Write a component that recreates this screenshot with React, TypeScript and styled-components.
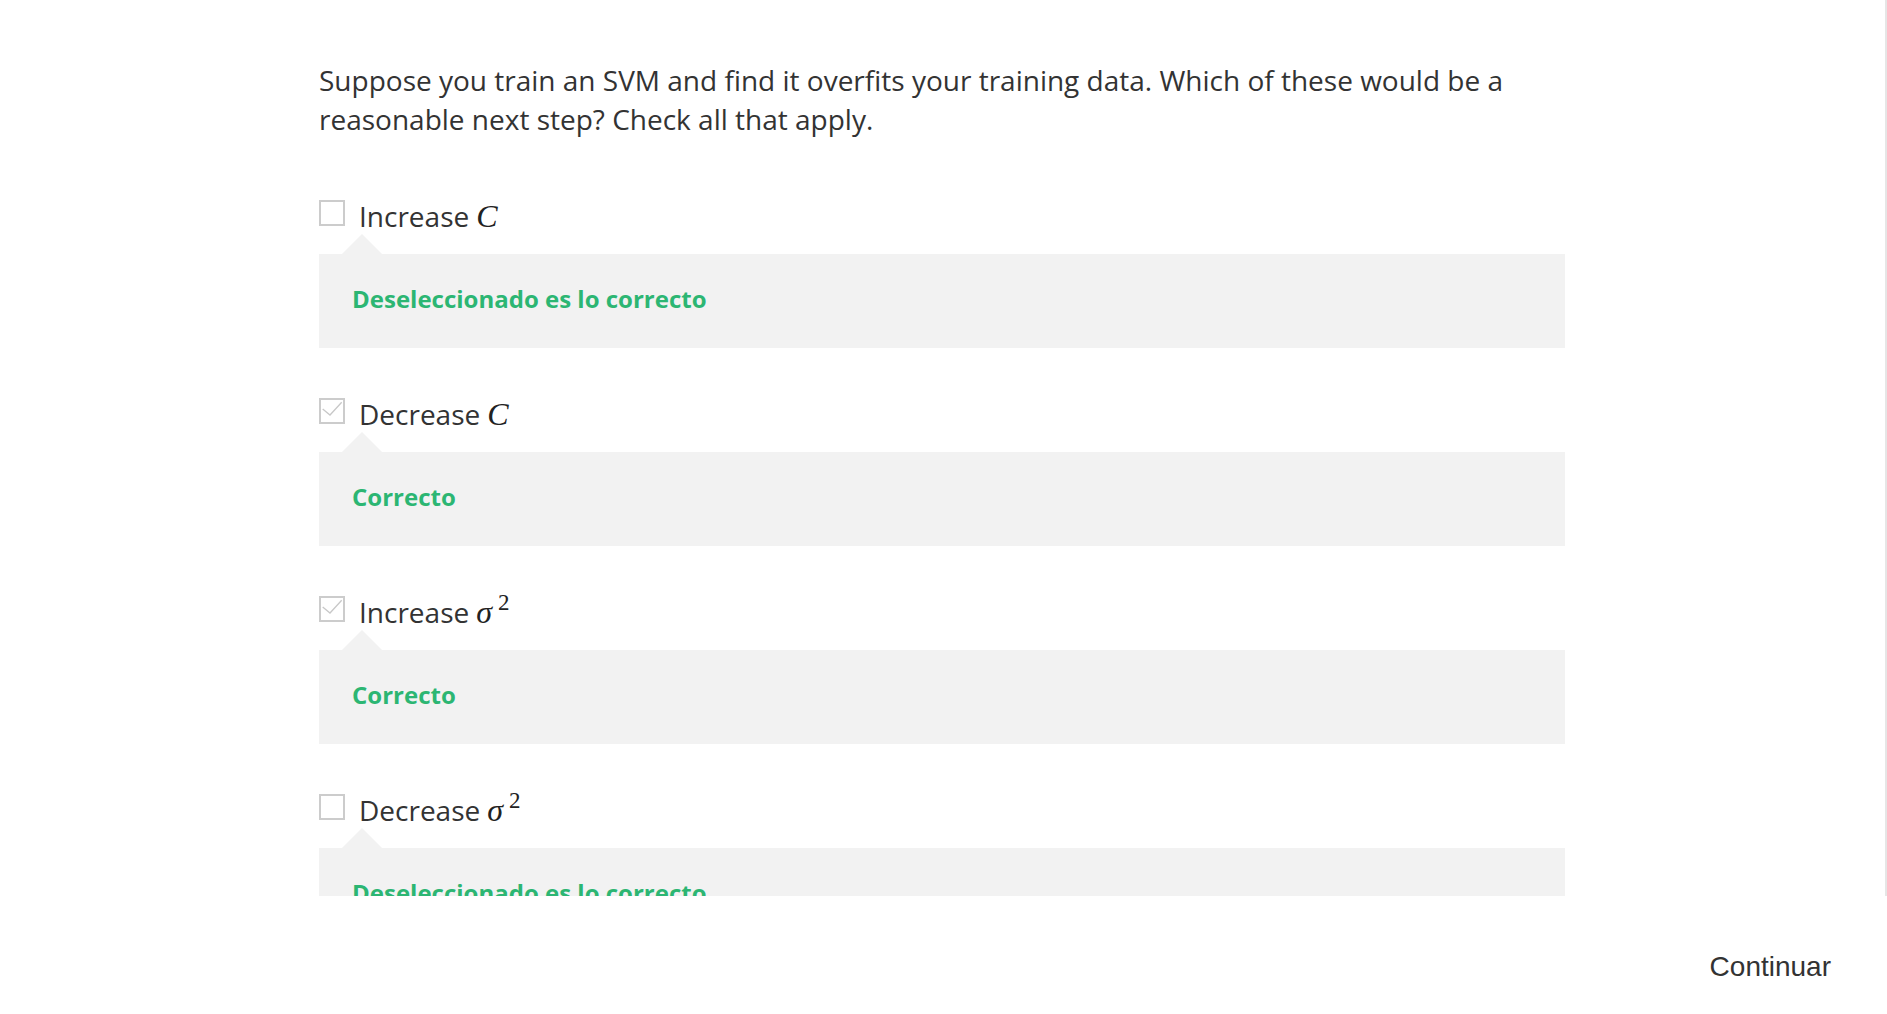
import React, { useLayoutEffect, useRef } from "react";
import styled, { createGlobalStyle } from "styled-components";

const GlobalStyle = createGlobalStyle`
  html, body { margin: 0; padding: 0; background: #ffffff; }
  body { font-family: "Open Sans", "Noto Sans", sans-serif; color: #333333; overflow: hidden; }
  * { box-sizing: border-box; }
`;

const Page = styled.div`
  width: 1887px;
  height: 1014px;
  display: flex;
  flex-direction: column;
  background: #ffffff;
`;

const ScrollArea = styled.div`
  height: 896px;
  flex: none;
  overflow-y: scroll;
  border-right: 2px solid #e6e6e6;
  &::-webkit-scrollbar { width: 3px; }
  &::-webkit-scrollbar-track { background: #ececec; }
  &::-webkit-scrollbar-thumb { background: #c4c4c4; }
`;

const Column = styled.div`
  width: 1246px;
  margin-left: 319px;
  padding: 96.5px 0 90px;
`;

const Question = styled.p`
  margin: 0 0 61px;
  font-size: 28px;
  line-height: 39.2px;
  color: #333333;
`;

const Options = styled.div`
  display: flex;
  flex-direction: column;
  gap: 50px;
`;

const Item = styled.div`
  display: flex;
  flex-direction: column;
`;

const OptionRow = styled.label`
  display: flex;
  align-items: flex-start;
  gap: 14px;
  height: 34px;
  font-size: 28px;
  line-height: 33px;
  color: #333333;
`;

const Box = styled.span`
  width: 26px;
  height: 26px;
  flex: none;
  border: 2px solid #cccccc;
  background: #ffffff;
  display: flex;
  align-items: center;
  justify-content: center;
  svg { display: block; }
`;

const Math = styled.span`
  font-family: "Liberation Serif", "DejaVu Serif", serif;
  font-style: italic;
  font-size: 32px;
  margin-left: 7px;
  color: #222222;
`;

const Sup = styled.sup`
  font-family: "Liberation Serif", "DejaVu Serif", serif;
  font-style: normal;
  font-size: 23px;
  vertical-align: 13px;
  line-height: 0;
  margin-left: 6px;
`;

const Feedback = styled.div`
  position: relative;
  margin-top: 20px;
  background: #f2f2f2;
  padding: 29px 33px 33px;
  font-size: 24px;
  line-height: 32px;
  font-weight: 700;
  color: #2cb673;

  &::before {
    content: "";
    position: absolute;
    top: -20px;
    left: 23px;
    border-left: 20px solid transparent;
    border-right: 20px solid transparent;
    border-bottom: 20px solid #f2f2f2;
  }
`;

const Footer = styled.div`
  flex: 1;
  display: flex;
  justify-content: flex-end;
  align-items: flex-start;
  padding: 55px 56px 0 0;
`;

const ContinueButton = styled.button`
  border: none;
  background: none;
  padding: 0;
  font-family: "Liberation Sans", Arial, sans-serif;
  font-size: 28px;
  line-height: 32px;
  color: #333333;
  cursor: pointer;
`;

type Opt = { verb: string; sym: "C" | "σ"; sq: boolean; checked: boolean; feedback: string };

const options: Opt[] = [
  { verb: "Increase", sym: "C", sq: false, checked: false, feedback: "Deseleccionado es lo correcto" },
  { verb: "Decrease", sym: "C", sq: false, checked: true, feedback: "Correcto" },
  { verb: "Increase", sym: "σ", sq: true, checked: true, feedback: "Correcto" },
  { verb: "Decrease", sym: "σ", sq: true, checked: false, feedback: "Deseleccionado es lo correcto" },
];

function CheckBox({ checked }: { checked: boolean }) {
  return (
    <Box>
      {checked && (
        <svg width="22" height="22" viewBox="0 0 22 22">
          <path d="M1.7 9 L9 15 L20.7 2.3" fill="none" stroke="#c8c8c8" strokeWidth="1.3" />
        </svg>
      )}
    </Box>
  );
}

export default function App() {
  const ref = useRef<HTMLDivElement>(null);
  useLayoutEffect(() => {
    if (ref.current) ref.current.scrollTop = 36;
  }, []);
  return (
    <>
      <GlobalStyle />
      <Page>
        <ScrollArea ref={ref}>
          <Column>
            <Question>
              Suppose you train an SVM and find it overfits your training data. Which of these would be a
              reasonable next step? Check all that apply.
            </Question>
            <Options>
              {options.map((o, i) => (
                <Item key={i}>
                  <OptionRow>
                    <CheckBox checked={o.checked} />
                    <span>
                      {o.verb}
                      <Math>
                        {o.sym}
                        {o.sq && <Sup>2</Sup>}
                      </Math>
                    </span>
                  </OptionRow>
                  <Feedback>{o.feedback}</Feedback>
                </Item>
              ))}
            </Options>
          </Column>
        </ScrollArea>
        <Footer>
          <ContinueButton>Continuar</ContinueButton>
        </Footer>
      </Page>
    </>
  );
}
